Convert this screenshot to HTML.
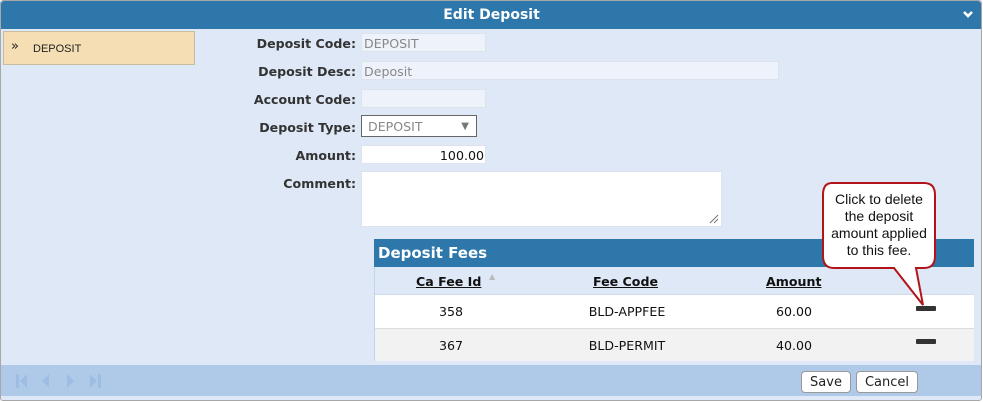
<!DOCTYPE html>
<html><head><style>
body{margin:0;width:983px;height:402px;background:#fff;font-family:"DejaVu Sans","Liberation Sans",sans-serif;overflow:hidden;position:relative}
.a{position:absolute}
.lbl{position:absolute;right:627px;font-size:12.6px;font-weight:bold;color:#333;text-align:right;white-space:nowrap}
.inp{position:absolute;left:361px;height:19px;border:1px solid #dde3ec;background:#eef3fb;font-size:12.6px;color:#888;line-height:19px;padding-left:2px;box-sizing:border-box}
.th{position:absolute;top:274px;font-size:12.6px;font-weight:bold;text-decoration:underline;color:#111}
.td{position:absolute;font-size:12.6px;color:#111;transform:translateX(-50%)}
.btn{position:absolute;top:371px;height:22px;border:1px solid #999;border-radius:4px;background:#fff;font-size:13px;line-height:21px;text-align:center;box-sizing:border-box;color:#222}
</style></head><body>
<div class="a" style="left:0;top:0;border:1px solid #a8a8a8;border-radius:3px;background:#dfe8f6;box-sizing:border-box;width:982px;height:401px"></div>
<div class="a" style="left:1px;top:1px;width:980px;height:28px;background:#2e77aa;border-radius:3px 3px 0 0"></div>
<div class="a" style="left:0;top:7px;width:983px;text-align:center;color:#fff;font-weight:bold;font-size:14px">Edit Deposit</div>
<svg class="a" style="left:962px;top:10px" width="12" height="9"><path d="M2 2 L6 6 L10 2" stroke="#fff" stroke-width="2.6" fill="none"/></svg>
<div class="a" style="left:3px;top:31px;width:192px;height:34px;background:#f5deb3;border:1px solid #c7bba0;box-sizing:border-box"></div>
<div class="a" style="left:11px;top:39px;font-size:13px;color:#222">»</div>
<div class="a" style="left:33px;top:43px;font-size:11px;color:#222;font-family:'Liberation Sans',sans-serif">DEPOSIT</div>

<div class="lbl" style="top:36px">Deposit Code:</div>
<div class="lbl" style="top:64px">Deposit Desc:</div>
<div class="lbl" style="top:92px">Account Code:</div>
<div class="lbl" style="top:120px">Deposit Type:</div>
<div class="lbl" style="top:148px">Amount:</div>
<div class="lbl" style="top:176px">Comment:</div>

<div class="inp" style="top:33px;width:125px;line-height:20px">DEPOSIT</div>
<div class="inp" style="top:61px;width:418px;line-height:20px">Deposit</div>
<div class="inp" style="top:89px;width:125px"></div>
<div class="inp" style="top:115px;width:116px;height:22px;background:#fff;border:1px solid #666;padding-left:6px;line-height:22px">DEPOSIT<span style="position:absolute;right:7px;font-size:10px;color:#777">▼</span></div>
<div class="inp" style="top:145px;width:125px;background:#fff;color:#111;text-align:right;padding-right:1px;line-height:20px">100.00</div>
<div class="inp" style="top:171px;width:361px;height:56px;background:#fff"></div>
<svg class="a" style="left:709px;top:214px" width="10" height="10"><path d="M1 9 L9 1 M5 9 L9 5" stroke="#777" stroke-width="1"/></svg>

<div class="a" style="left:374px;top:239px;width:600px;height:122px;background:#fff;border-left:1px solid #c5d5e8;box-sizing:border-box"></div>
<div class="a" style="left:374px;top:239px;width:600px;height:28px;background:#2e77aa"></div>
<div class="a" style="left:378px;top:244px;color:#fff;font-weight:bold;font-size:15px">Deposit Fees</div>
<div class="a" style="left:375px;top:267px;width:599px;height:28px;background:#dfe8f6;border-bottom:1px solid #cfdbe9;box-sizing:border-box"></div>
<div class="th" style="left:416px">Ca Fee Id</div>
<div class="a" style="left:489px;top:272px;font-size:8px;color:#bbb">▲</div>
<div class="th" style="left:593px">Fee Code</div>
<div class="th" style="left:766px">Amount</div>
<div class="a" style="left:375px;top:328px;width:599px;height:33px;background:#f2f2f2;border-top:1px solid #ddd;box-sizing:border-box"></div>
<div class="td" style="left:451px;top:304px">358</div>
<div class="td" style="left:627px;top:304px">BLD-APPFEE</div>
<div class="td" style="left:794px;top:304px">60.00</div>
<div class="td" style="left:451px;top:338px">367</div>
<div class="td" style="left:627px;top:338px">BLD-PERMIT</div>
<div class="td" style="left:794px;top:338px">40.00</div>
<div class="a" style="left:916px;top:306px;width:20px;height:5px;background:#333;border-radius:1px"></div>
<div class="a" style="left:916px;top:339px;width:20px;height:5px;background:#333;border-radius:1px"></div>

<div class="a" style="left:1px;top:365px;width:980px;height:31px;background:#afcae8"></div>
<svg class="a" style="left:14px;top:372px" width="92" height="18" fill="#9dbde3">
<path d="M2 2h3v14H2z M6 9 L13 2 V16z"/><path d="M28 9 L35 2 V16z"/><path d="M53 2 L60 9 L53 16z"/><path d="M76 2 L83 9 L76 16z M84 2h3v14h-3z"/></svg>
<div class="btn" style="left:801px;width:50px">Save</div>
<div class="btn" style="left:856px;width:62px">Cancel</div>

<svg class="a" style="left:818px;top:180px" width="125" height="128">
<path d="M14 3 H106 Q117 3 117 15 V76 Q117 88 106 88 H98 L105 125 L76 88 H16 Q5 88 5 76 V15 Q5 3 14 3 Z" fill="#fff" stroke="#b3141a" stroke-width="2"/></svg>
<div class="a" style="left:822px;top:191px;width:114px;text-align:center;font-family:'Liberation Sans',sans-serif;font-size:14px;line-height:17px;color:#111">Click to delete<br>the deposit<br>amount applied<br>to this fee.</div>
</body></html>
